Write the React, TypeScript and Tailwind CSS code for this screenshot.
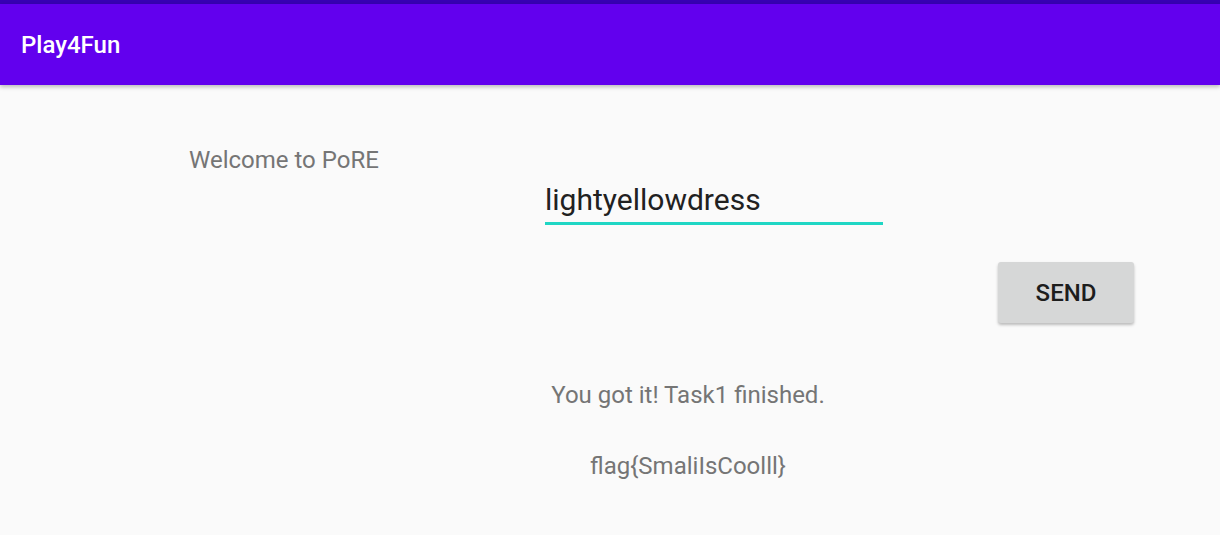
const App = () => {
  return (
    <div className="w-[1220px] h-[535px] bg-[#fafafa] overflow-hidden font-['Roboto',sans-serif]">
      <div className="h-[4px] bg-[#3700b3]" />
      <header className="h-[81px] bg-[#6200ee] flex items-center pl-[21px] shadow-[0_2px_4px_rgba(0,0,0,0.25)] relative">
        <h1 className="text-white text-[24px] font-medium leading-none">Play4Fun</h1>
      </header>

      <main className="flex flex-col">
        <p className="ml-[189px] mt-[61px] text-[24px] leading-[28px] text-[#757575]">
          Welcome to PoRE
        </p>

        <div className="ml-[545px] mt-[8px] w-[338px]">
          <div className="text-[30px] leading-[35px] text-[#212121]">lightyellowdress</div>
          <div className="mt-[5px] h-[3px] bg-[#1fd6c4]" />
        </div>

        <div className="flex justify-end pr-[86px] mt-[37px]">
          <button className="w-[136px] h-[61px] bg-[#d6d7d7] rounded-[3px] text-[24px] font-medium text-[#1d1d1d] shadow-[0_2px_3px_rgba(0,0,0,0.25)]">
            SEND
          </button>
        </div>

        <div className="flex flex-col items-center pl-[156px] text-[24px] leading-[28px] text-[#757575]">
          <p className="mt-[58px]">You got it! Task1 finished.</p>
          <p className="mt-[43px]">flag{"{"}SmaliIsCoolll{"}"}</p>
        </div>
      </main>
    </div>
  );
};

export default App;
